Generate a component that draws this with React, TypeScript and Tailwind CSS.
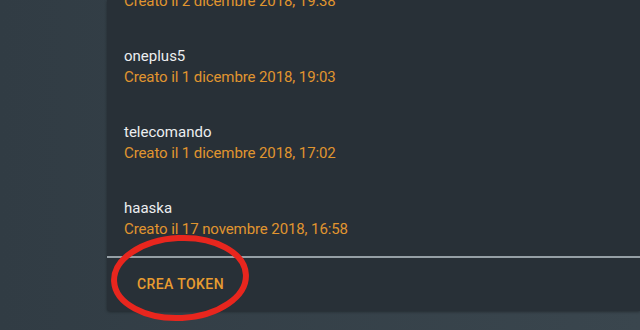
import React from "react";

const rows = [
  { name: "", date: "Creato il 2 dicembre 2018, 19:38" },
  { name: "oneplus5", date: "Creato il 1 dicembre 2018, 19:03" },
  { name: "telecomando", date: "Creato il 1 dicembre 2018, 17:02" },
  { name: "haaska", date: "Creato il 17 novembre 2018, 16:58" },
];

export default function App() {
  return (
    <div
      className="relative w-[640px] h-[330px] overflow-hidden flex bg-[linear-gradient(90deg,#313c44_0%,#3a464e_100%)]"
      style={{ fontFamily: "Roboto, 'Noto Sans', sans-serif" }}
    >
      <div className="w-[107px] shrink-0" />
      <div className="flex-1 flex flex-col">
        <div className="bg-[#283037] rounded-bl-[3px] h-[311px] flex flex-col overflow-hidden shadow-[0_1px_3px_rgba(0,0,0,0.35)]">
          <div className="flex flex-col -mt-[48px] pl-[17px]">
            {rows.map((r, i) => (
              <div key={i} className="pt-[18px] pb-[16px] flex flex-col">
                <div className="text-[15px] leading-[21px] h-[21px] text-[#eceef0]">{r.name}</div>
                <div className="text-[15px] leading-[21px] tracking-[-0.1px] text-[#e0952f]">{r.date}</div>
              </div>
            ))}
          </div>
          <div className="h-[2px] bg-[#959fa5] shrink-0" />
          <div className="h-[53px] flex items-center pl-[30px] shrink-0">
            <span className="text-[14px] font-medium tracking-[0.4px] text-[#e89c30]">CREA TOKEN</span>
          </div>
        </div>
      </div>
      <svg
        className="absolute left-[109px] top-[232px]"
        width="142"
        height="92"
        viewBox="0 0 142 92"
      >
        <ellipse
          cx="71"
          cy="46"
          rx="66"
          ry="40"
          fill="none"
          stroke="#e8261e"
          strokeWidth="6"
          transform="rotate(-3 71 46)"
        />
      </svg>
    </div>
  );
}
